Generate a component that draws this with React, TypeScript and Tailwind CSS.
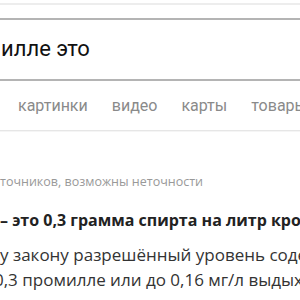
const tabs = ['картинки', 'видео', 'карты', 'товары'];

const App = () => {
  return (
    <div className="w-[300px] h-[300px] overflow-hidden bg-white flex flex-col">
      {/* top edge */}
      <div className="mt-[3px] h-[2px] bg-[#ededed] shrink-0" />

      {/* search field */}
      <div className="mt-[13px] h-[63px] shrink-0 border-y-2 border-[#b4b4b4] pt-[15px] pl-[1px]">
        <p className="text-[22px] leading-[27px] text-[#111] font-['Roboto',sans-serif] whitespace-nowrap">
          илле это
        </p>
      </div>

      {/* tabs */}
      <nav className="mt-[14px] flex gap-[24px] pl-[18px] whitespace-nowrap shrink-0">
        {tabs.map((t) => (
          <span key={t} className="text-[16px] leading-[22px] text-[#8a8a8a] font-['Roboto',sans-serif]">
            {t}
          </span>
        ))}
      </nav>
      <div className="mt-[13px] h-[1px] bg-[#e6e6e6] shrink-0" />
      <div className="h-[1px] bg-[#f5f5f5] shrink-0" />

      {/* answer */}
      <div className="mt-[42px] font-['Open_Sans',sans-serif] whitespace-nowrap">
        <p className="text-[12.5px] leading-[16px] text-[#999]">точников, возможны неточности</p>
        <p className="mt-[20px] text-[16px] leading-[20px] font-bold text-[#222]">
          – это 0,3 грамма спирта на литр крови
        </p>
        <p className="mt-[12px] text-[17px] leading-[25px] text-[#333]">у закону разрешённый уровень содержания</p>
        <p className="text-[17px] leading-[25px] text-[#333]">
          <span className="ml-[-6px]">0,3 промилле или до 0,16 мг/л выдыхаемого</span>
        </p>
      </div>
    </div>
  );
};

export default App;
